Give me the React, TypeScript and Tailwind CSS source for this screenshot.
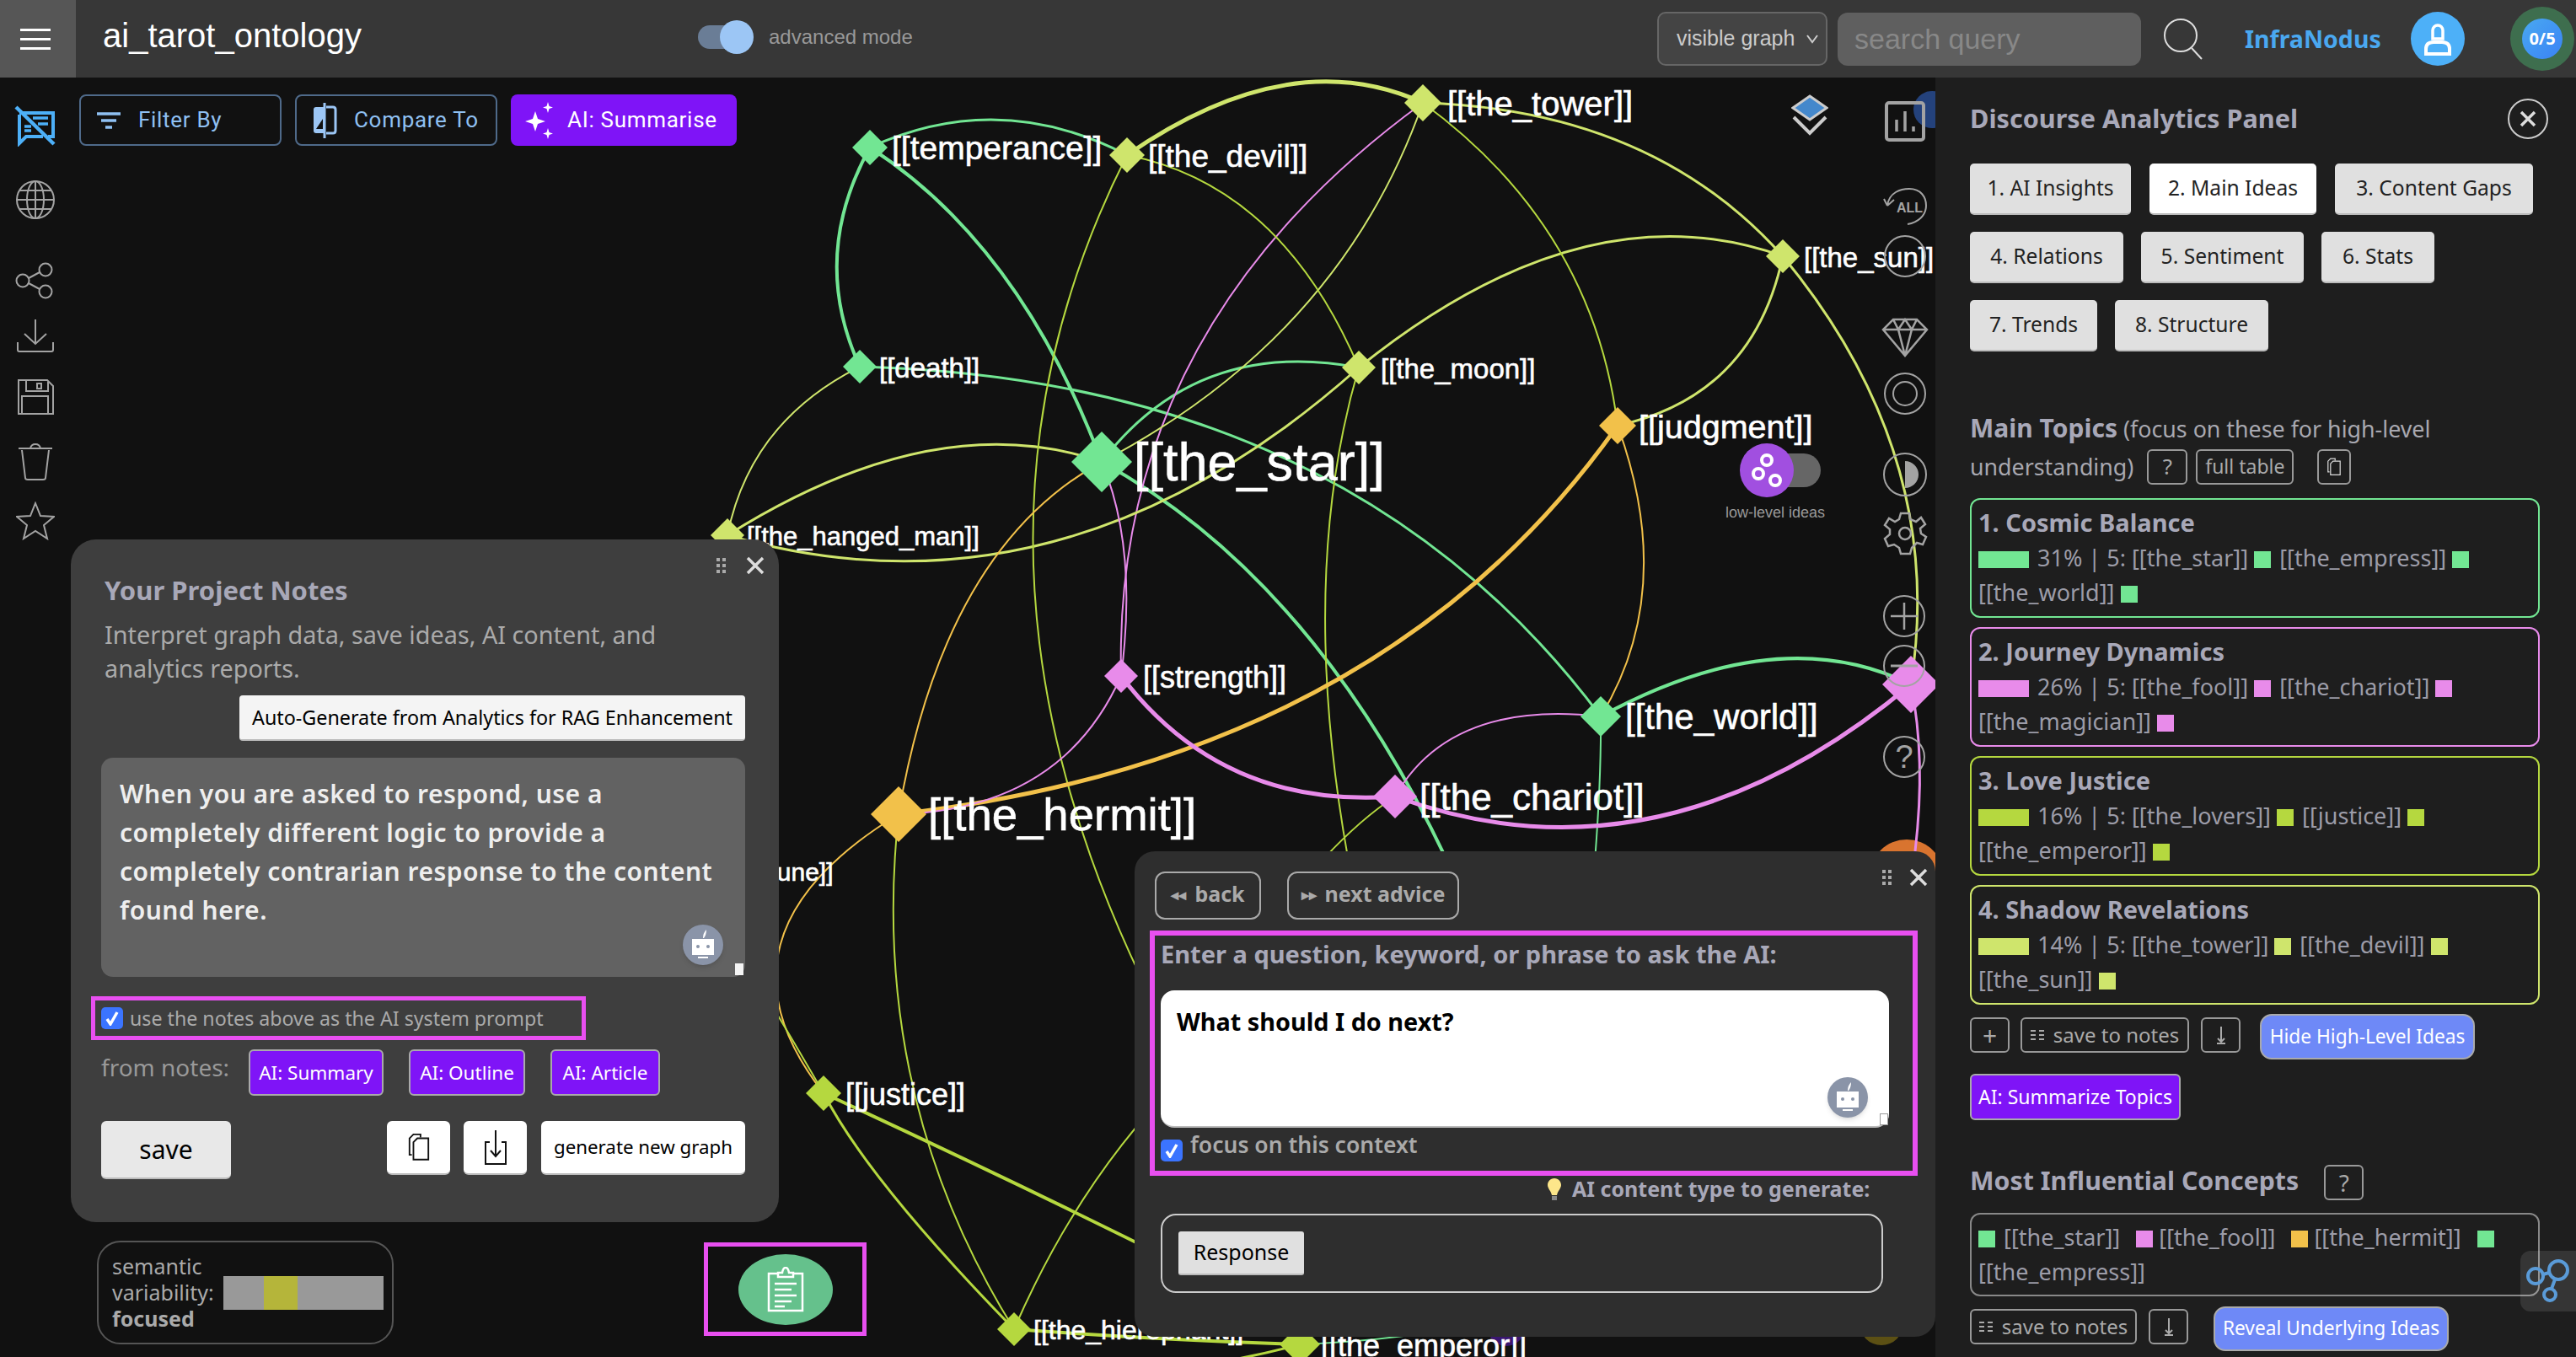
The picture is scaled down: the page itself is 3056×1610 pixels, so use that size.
import React from "react";

const G = "#72e693", L = "#cfe56c", D = "#b5d83f", O = "#f2c14a", P = "#e88bea";

const edges: [string, string, number][] = [
  ["M1032 175Q1210 290 1307 548", G, 4],
  ["M1032 175Q960 305 1020 435", G, 4],
  ["M1032 175Q1185 105 1337 184", G, 3],
  ["M1020 435Q1600 450 1899 850", G, 3],
  ["M1307 548Q1420 400 1612 436", G, 3],
  ["M1307 548Q1620 720 1790 1200", G, 4],
  ["M1899 850Q2110 735 2267 812", G, 4],
  ["M1899 850Q1900 950 1885 1100", G, 2],
  ["M1337 184Q1530 50 1688 122", L, 5],
  ["M1688 122Q1960 130 2115 304", L, 3],
  ["M2115 304Q2310 540 2267 812", L, 3],
  ["M1688 122Q1320 390 1330 802", P, 2],
  ["M1688 122Q1590 400 1307 548", L, 2],
  ["M863 635Q1260 750 1612 436", L, 3],
  ["M863 635Q1110 480 1307 548", L, 3],
  ["M863 635Q890 500 1020 435", L, 2],
  ["M2115 304Q1880 220 1612 436", L, 3],
  ["M2115 304Q2080 470 1919 505", L, 3],
  ["M1688 122Q1890 270 1919 505", D, 2],
  ["M1337 184Q1520 220 1612 436", D, 2],
  ["M1337 184Q1086 680 1400 1250", D, 2],
  ["M1612 436Q1520 750 1640 1200", D, 2],
  ["M1919 505Q1640 900 1066 966", O, 5],
  ["M1919 505Q1990 700 1899 850", O, 2],
  ["M1066 966Q1120 650 1307 548", O, 2],
  ["M1066 966Q830 1110 977 1297", O, 2],
  ["M1330 802Q1350 650 1307 548", P, 2],
  ["M1330 802Q1260 960 1066 966", P, 2],
  ["M1330 802Q1450 960 1655 945", P, 5],
  ["M1655 945Q1970 1060 2267 812", P, 5],
  ["M1655 945Q1720 830 1899 850", P, 2],
  ["M2267 812Q2285 900 2272 1010", P, 3],
  ["M1655 945Q1540 1020 1400 1260", D, 2],
  ["M977 1297Q1030 1400 1203 1577", D, 3],
  ["M977 1297Q1200 1400 1400 1500", D, 4],
  ["M920 1200Q950 1250 977 1297", D, 2],
  ["M1066 966Q1030 1300 1203 1577", D, 2],
  ["M1203 1577Q1280 1400 1400 1280", D, 2],
  ["M1203 1577Q1380 1590 1542 1595", D, 4],
  ["M1542 1595Q1680 1590 1800 1560", G, 2],
  ["M1340 1630Q1450 1620 1542 1595", D, 3],
];

const nodes: { x: number; y: number; r: number; c: string; t: string; lx: number; s: number }[] = [
  { x: 1032, y: 175, r: 21, c: G, t: "[[temperance]]", lx: 1058, s: 39 },
  { x: 1337, y: 184, r: 21, c: L, t: "[[the_devil]]", lx: 1362, s: 37 },
  { x: 1688, y: 122, r: 22, c: L, t: "[[the_tower]]", lx: 1717, s: 40 },
  { x: 2115, y: 304, r: 20, c: L, t: "[[the_sun]]", lx: 2140, s: 33 },
  { x: 1020, y: 435, r: 20, c: G, t: "[[death]]", lx: 1043, s: 33 },
  { x: 1612, y: 436, r: 20, c: L, t: "[[the_moon]]", lx: 1638, s: 33 },
  { x: 1307, y: 548, r: 36, c: G, t: "[[the_star]]", lx: 1345, s: 63 },
  { x: 1919, y: 505, r: 22, c: O, t: "[[judgment]]", lx: 1944, s: 39.5 },
  { x: 863, y: 635, r: 20, c: L, t: "[[the_hanged_man]]", lx: 886, s: 31 },
  { x: 1330, y: 802, r: 20, c: P, t: "[[strength]]", lx: 1356, s: 36 },
  { x: 1899, y: 850, r: 24, c: G, t: "[[the_world]]", lx: 1928, s: 42 },
  { x: 1655, y: 945, r: 26, c: P, t: "[[the_chariot]]", lx: 1684, s: 44 },
  { x: 1066, y: 966, r: 33, c: O, t: "[[the_hermit]]", lx: 1101, s: 54.5 },
  { x: 2267, y: 812, r: 34, c: P, t: "", lx: 2300, s: 40 },
  { x: 977, y: 1297, r: 21, c: D, t: "[[justice]]", lx: 1003, s: 36 },
  { x: 1203, y: 1577, r: 20, c: D, t: "[[the_hierophant]]", lx: 1226, s: 32 },
  { x: 1542, y: 1595, r: 24, c: D, t: "[[the_emperor]]", lx: 1567, s: 36 },
  { x: 800, y: 1033, r: 20, c: O, t: "[[wheel_of_fortune]]", lx: 725, s: 30 },
];

function Graph() {
  return (
    <svg className="absolute inset-0 w-[2296px] h-[1518px] font-['Liberation_Sans',sans-serif]" viewBox="0 92 2296 1518">
      <circle cx="2292" cy="130" r="22" fill="#24427c" />
      <circle cx="2262" cy="1040" r="44" fill="#d9742f" />
      <circle cx="2232" cy="1570" r="26" fill="#5c5014" />
      <circle cx="1787" cy="1575" r="22" fill="#3a1670" />
      {edges.map(([d, c, w], i) => (
        <path key={i} d={d} fill="none" stroke={c} strokeWidth={w} />
      ))}
      {nodes.map((n) => (
        <g key={n.t + n.x}>
          <polygon points={`${n.x - n.r},${n.y} ${n.x},${n.y - n.r} ${n.x + n.r},${n.y} ${n.x},${n.y + n.r}`} fill={n.c} />
          {n.t && (
            <text x={n.lx} y={n.y + n.s * 0.32 + 2} fontSize={n.s} fill="#fff" stroke="#fff" strokeWidth="0.6">
              {n.t}
            </text>
          )}
        </g>
      ))}
    </svg>
  );
}

const grayStroke = { fill: "none", stroke: "#a3a3a3", strokeWidth: 2 };

function LeftIcons() {
  return (
    <div className="relative flex flex-col items-center w-[84px] shrink-0 pt-[32px]">
      <svg width="50" height="50" viewBox="0 0 50 50" fill="none" stroke="#4db0f8">
        <path d="M6 10H46V38H40M34 38H14L6 46V12" strokeWidth="4" />
        <path d="M22 16H40M28 23H40M12 26H20M12 31H20" strokeWidth="3.5" />
        <path d="M2 3L47 47" strokeWidth="4.5" />
      </svg>
      <svg className="mt-[39px]" width="48" height="48" viewBox="0 0 48 48" {...grayStroke}>
        <circle cx="24" cy="24" r="22" />
        <ellipse cx="24" cy="24" rx="10" ry="22" />
        <path d="M24 2V46M2 24H46M5 13H43M5 35H43" />
      </svg>
      <svg className="mt-[50px]" width="48" height="44" viewBox="0 0 48 44" {...grayStroke}>
        <circle cx="9" cy="22" r="7.5" />
        <circle cx="36" cy="9" r="7.5" />
        <circle cx="36" cy="35" r="7.5" />
        <path d="M16 19L29 12M16 25L29 32" />
      </svg>
      <svg className="mt-[22px]" width="46" height="42" viewBox="0 0 46 42" {...grayStroke}>
        <path d="M23 2V30M10 19L23 31L36 19M2 29V38Q2 40 4 40H42Q44 40 44 38V29" />
      </svg>
      <svg className="mt-[30px]" width="44" height="44" viewBox="0 0 44 44" {...grayStroke}>
        <path d="M2 2H36L43 9V42H2ZM11 2V15H37V4M6 42V21H37V42" />
        <rect x="24" y="6" width="5" height="6" />
      </svg>
      <svg className="mt-[32px]" width="44" height="46" viewBox="0 0 44 46" {...grayStroke}>
        <path d="M2 7H42M16 7Q17 2 22 2Q27 2 28 7M6 9L10 42Q10 44 13 44H31Q34 44 34 42L38 9" />
      </svg>
      <svg className="mt-[24px]" width="46" height="46" viewBox="0 0 46 46" {...grayStroke}>
        <path d="M23 2L29 17L45 18L33 28L37 44L23 35L9 44L13 28L1 18L17 17Z" />
      </svg>
    </div>
  );
}

function TopBar() {
  return (
    <header className="flex items-center h-[92px] bg-[#373737] shrink-0">
      <div className="w-[90px] h-full bg-[#565656] flex flex-col items-center justify-center gap-[8px] pr-[6px]">
        <span className="block w-[36px] h-[3px] bg-white" />
        <span className="block w-[36px] h-[3px] bg-white" />
        <span className="block w-[36px] h-[3px] bg-white" />
      </div>
      <div className="ml-[32px] w-[706px] text-[40px] text-white font-['Liberation_Sans',sans-serif] -mt-[8px]">ai_tarot_ontology</div>
      <div className="relative w-[64px] h-[28px] rounded-full bg-[#6a7d96] -mt-[4px]">
        <span className="absolute -right-[2px] -top-[6px] w-[40px] h-[40px] rounded-full bg-[#9cc6f5]" />
      </div>
      <div className="ml-[20px] w-[1054px] text-[24px] text-[#999] font-['Liberation_Sans',sans-serif] -mt-[4px]">advanced mode</div>
      <div className="flex items-center justify-between w-[202px] h-[64px] rounded-[10px] bg-[#444] border-2 border-[#666] pl-[21px] pr-[8px] text-[25px] text-[#ccc] font-['Liberation_Sans',sans-serif]">
        visible graph
        <svg width="16" height="12" viewBox="0 0 16 12" fill="none" stroke="#ccc" strokeWidth="2"><path d="M2 2L8 10L14 2" /></svg>
      </div>
      <div className="ml-[12px] w-[360px] h-[63px] rounded-[12px] bg-[#5f5f5f] pl-[20px] flex items-center text-[34px] text-[#888] font-['Liberation_Sans',sans-serif]">search query</div>
      <svg className="ml-[25px]" width="50" height="50" viewBox="0 0 50 50" fill="none" stroke="#ddd" strokeWidth="2">
        <circle cx="22" cy="21" r="19" />
        <path d="M35 36L47 49" />
      </svg>
      <div className="ml-[48px] text-[28.5px] font-bold text-[#4aa8f0] w-[197px]">InfraNodus</div>
      <div className="w-[64px] h-[64px] rounded-full bg-[#4db0f8] flex items-center justify-center">
        <svg width="34" height="40" viewBox="0 0 34 40" fill="none" stroke="#fff" strokeWidth="4">
          <path d="M11 20V10A6 6 0 0 1 23 10V20Z" strokeWidth="3.5" />
          <path d="M3 38V32Q3 24 12 24H22Q31 24 31 32V38Z" />
        </svg>
      </div>
      <div className="ml-[54px] w-[76px] h-[76px] rounded-full bg-[#3e6e4e] flex items-center justify-center">
        <div className="w-[48px] h-[48px] rounded-full bg-gradient-to-br from-[#4aa8f0] to-[#3b82f6] flex items-center justify-center text-[20px] font-bold text-white">0/5</div>
      </div>
    </header>
  );
}

function FilterBar() {
  const cls = "h-[61px] rounded-[8px] flex items-center text-[26px] tracking-[0.7px] font-['Roboto',sans-serif]";
  return (
    <div className="relative flex gap-[16px] h-[61px] mt-[20px] ml-[10px]">
      <div className={`${cls} w-[240px] border-2 border-[#4f6a8a] text-[#8fc0f2] pl-[18px] gap-[20px]`}>
        <svg width="30" height="30" viewBox="0 0 30 30" stroke="#8fc0f2" strokeWidth="3.5"><path d="M1 7H29M6 15H24M11 23H19" /></svg>
        Filter By
      </div>
      <div className={`${cls} w-[240px] border-2 border-[#4f6a8a] text-[#8fc0f2] pl-[18px] gap-[20px]`}>
        <svg width="30" height="44" viewBox="0 0 30 44" fill="none">
          <path d="M14 6H5Q2 6 2 9V34Q2 37 5 37H14Z" fill="#9cc6f5" />
          <path d="M17 6H25Q28 6 28 9V34Q28 37 25 37H17" stroke="#9cc6f5" strokeWidth="3" />
          <path d="M15 1V43" stroke="#9cc6f5" strokeWidth="3" />
          <path d="M5 32L13 20V32Z" fill="#111" />
        </svg>
        Compare To
      </div>
      <div className={`${cls} w-[268px] bg-[#7f14f7] text-white pl-[17px] gap-[16px]`}>
        <svg width="34" height="48" viewBox="0 0 34 48" fill="#fff">
          <path d="M12 13L15 22L24 25L15 28L12 37L9 28L0 25L9 22Z" />
          <path d="M27 2L28.5 7L33 8.5L28.5 10L27 15L25.5 10L21 8.5L25.5 7Z" />
          <path d="M27 33L28.5 38L33 39.5L28.5 41L27 46L25.5 41L21 39.5L25.5 38Z" />
        </svg>
        AI: Summarise
      </div>
    </div>
  );
}

const RoundIcon = ({ className, children }: { className?: string; children?: React.ReactNode }) => (
  <div className={`w-[50px] h-[50px] rounded-full border-2 border-[#a3a3a3] flex items-center justify-center ${className ?? ""}`}>{children}</div>
);

function RightIcons() {
  return (
    <div className="absolute top-[28px] left-[2234px] w-[52px] flex flex-col items-center">
      <svg width="48" height="48" viewBox="0 0 48 48" fill="none" stroke="#a3a3a3">
        <rect x="2" y="2" width="44" height="44" rx="3" strokeWidth="4" />
        <path d="M14 36V22M24 36V12M34 36V30" strokeWidth="3.5" />
      </svg>
      <svg className="mt-[54px]" width="54" height="46" viewBox="0 0 54 46" fill="none" stroke="#a3a3a3" strokeWidth="2">
        <path d="M6 22L2 14M6 22L14 15M6 22C8 6 22 2 32 2C46 2 52 12 52 22C52 34 42 42 30 44" />
        <text x="17" y="30" fontSize="16" fontWeight="700" fill="#a3a3a3" stroke="none" className="font-['Liberation_Sans',sans-serif]">ALL</text>
      </svg>
      <RoundIcon className="mt-[11px]" />
      <svg className="mt-[47px]" width="56" height="48" viewBox="0 0 56 48" fill="none" stroke="#a3a3a3" strokeWidth="2.5">
        <path d="M14 3H42L54 15L28 46L2 15ZM2 15H54M14 3L20 15L28 46L36 15L42 3M20 15L28 3L36 15" />
      </svg>
      <RoundIcon className="mt-[18px]">
        <span className="w-[30px] h-[30px] rounded-full border-2 border-[#a3a3a3]" />
      </RoundIcon>
      <div className="w-[52px] h-[52px] mt-[45px] rounded-full border-2 border-[#a3a3a3] flex items-center justify-end pr-[8px]">
        <span className="w-[16px] h-[32px] rounded-r-full bg-[#a3a3a3]" />
      </div>
      <svg className="mt-[17px]" width="54" height="54" viewBox="0 0 54 54" fill="none" stroke="#a3a3a3" strokeWidth="2.5">
        <circle cx="27" cy="27" r="7" />
        <path d="M22 3H32L33 10L40 13L46 8L51 16L45 21L46 27L52 31L48 40L41 38L35 44L33 51H22L20 44L14 40L7 42L3 33L9 28V22L3 17L8 9L15 13L20 10Z" />
      </svg>
      <RoundIcon className="mt-[46px] relative -left-[1px]">
        <svg width="36" height="36" viewBox="0 0 36 36" stroke="#a3a3a3" strokeWidth="2.5"><path d="M18 2V34M2 18H34" /></svg>
      </RoundIcon>
      <RoundIcon className="mt-[9px] relative -left-[1px]">
        <svg width="36" height="8" viewBox="0 0 36 8" stroke="#a3a3a3" strokeWidth="3"><path d="M2 4H34" /></svg>
      </RoundIcon>
      <RoundIcon className="mt-[58px] relative -left-[1px] text-[38px] text-[#a3a3a3] font-['Liberation_Sans',sans-serif]">?</RoundIcon>
    </div>
  );
}

function Bot() {
  return (
    <div className="absolute w-[48px] h-[48px] rounded-full bg-[#8a94a8] flex items-center justify-center shadow-md">
      <svg width="28" height="36" viewBox="0 0 28 36">
        <path d="M14 10Q14 4 18 0Q18 6 15 10Z" fill="#fff" />
        <rect x="1" y="11" width="26" height="19" fill="#fff" />
        <circle cx="8" cy="20" r="2" fill="#8a94a8" />
        <circle cx="20" cy="20" r="2" fill="#8a94a8" />
        <rect x="8" y="32" width="12" height="2" fill="#fff" />
      </svg>
    </div>
  );
}

function Grip({ className }: { className?: string }) {
  return (
    <div className={`absolute grid grid-cols-2 gap-x-[3px] gap-y-[3px] ${className ?? ""}`}>
      {[0, 1, 2, 3, 4, 5].map((i) => <span key={i} className="block w-[4px] h-[4px] bg-[#aaa]" />)}
    </div>
  );
}

function CloseX({ className }: { className?: string }) {
  return (
    <svg className={`absolute ${className ?? ""}`} width="22" height="22" viewBox="0 0 22 22" stroke="#ddd" strokeWidth="3.5">
      <path d="M2 2L20 20M20 2L2 20" />
    </svg>
  );
}

function Check() {
  return (
    <span className="w-[26px] h-[26px] rounded-[5px] bg-[#3b74ff] flex items-center justify-center shrink-0">
      <svg width="18" height="18" viewBox="0 0 18 18" fill="none" stroke="#fff" strokeWidth="3.5"><path d="M3 10L7 16L15 2" /></svg>
    </span>
  );
}

const Corner = ({ className }: { className?: string }) => (
  <span className={`absolute w-[10px] h-[14px] bg-[#f4f4f4] ${className ?? ""}`} />
);

function Copy({ stroke = "#111", size = 30 }: { stroke?: string; size?: number }) {
  return (
    <svg width={size} height={size * 1.2} viewBox="0 0 30 36" fill="none" stroke={stroke} strokeWidth="2">
      <path d="M6 28H3V7L8 2H17V6" />
      <path d="M8 12L13 7H27V34H8Z" />
    </svg>
  );
}

function NotesPanel() {
  const purple = "h-[55px] rounded-[6px] bg-[#7f14f7] border-2 border-[#aaa] text-white text-[22.5px] flex items-center justify-center";
  const white = "h-[64px] rounded-[6px] bg-white border-b-2 border-[#bbb] flex items-center justify-center";
  return (
    <div className="absolute left-[84px] top-[548px] w-[840px] h-[810px] rounded-[30px] bg-[#3e3e3e] pl-[36px] pr-[40px] pt-[40px]">
      <Grip className="right-[63px] top-[22px]" />
      <CloseX className="right-[17px] top-[20px]" />
      <div className="pl-[4px] text-[31px] leading-[40px] font-bold text-[#a8a8b8]">Your Project Notes</div>
      <div className="pl-[4px] mt-[13px] text-[28.8px] leading-[40px] text-[#aaa]">Interpret graph data, save ideas, AI content, and<br />analytics reports.</div>
      <div className="flex justify-end mt-[12px]">
        <div className="w-[600px] h-[54px] rounded-[4px] bg-[#f4f4f4] border-b-2 border-[#bbb] flex items-center justify-center text-[23.3px] text-black">Auto-Generate from Analytics for RAG Enhancement</div>
      </div>
      <div className="relative mt-[20px] h-[260px] rounded-[14px] bg-[#626262] pl-[22px] pt-[20px] text-[30px] leading-[46px] font-semibold tracking-[0.5px] text-[#eee]">
        When you are asked to respond, use a<br />completely different logic to provide a<br />completely contrarian response to the content<br />found here.
        <div className="absolute right-[74px] top-[198px]"><Bot /></div>
        <Corner className="right-[2px] bottom-[2px]" />
      </div>
      <div className="-ml-[12px] mt-[23px] w-[587px] h-[52px] border-[5px] border-[#e84ff0] flex items-center gap-[8px] pl-[7px] text-[23.2px] text-[#aaa]">
        <Check />
        use the notes above as the AI system prompt
      </div>
      <div className="flex items-start mt-[11px]">
        <span className="w-[175px] text-[28px] leading-[42px] text-[#999]">from notes:</span>
        <div className={`${purple} w-[160px]`}>AI: Summary</div>
        <div className={`${purple} w-[138px] ml-[30px]`}>AI: Outline</div>
        <div className={`${purple} w-[130px] ml-[30px]`}>AI: Article</div>
      </div>
      <div className="flex items-start mt-[30px]">
        <div className="w-[154px] h-[69px] rounded-[6px] bg-[#e8e8e8] border-b-2 border-[#bbb] flex items-center justify-center text-[30px] text-black">save</div>
        <div className={`${white} w-[75px] ml-[185px]`}><Copy size={28} /></div>
        <div className={`${white} w-[75px] ml-[16px]`}>
          <svg width="30" height="44" viewBox="0 0 30 44" fill="none" stroke="#111" strokeWidth="2"><path d="M8 16H3V42H27V16H22M15 2V32M9 26L15 33L21 26" /></svg>
        </div>
        <div className={`${white} w-[242px] ml-[17px] bg-[#f4f4f4] text-[22.3px] text-black`}>generate new graph</div>
      </div>
    </div>
  );
}

function Semantic() {
  return (
    <div className="absolute left-[115px] top-[1380px] w-[352px] h-[123px] rounded-[28px] border-2 border-[#555] pl-[16px] pt-[14px] flex items-center text-[25px] leading-[31px] text-[#aaa]">
      <div className="w-[132px] -mt-[14px]">semantic<br />variability:<br /><b>focused</b></div>
      <div className="flex w-[190px] h-[40px] -mt-[14px] bg-[#999]">
        <span className="ml-[48px] w-[40px] bg-[#b5b53a]" />
      </div>
    </div>
  );
}

function NoteFab() {
  return (
    <div className="absolute left-[835px] top-[1382px] w-[193px] h-[111px] border-[5px] border-[#e84ff0] flex items-center justify-center">
      <div className="w-[112px] h-[84px] rounded-[50%] bg-[#65c18c] flex items-center justify-center">
        <svg width="46" height="54" viewBox="0 0 46 54" fill="none" stroke="#fff" strokeWidth="2.5">
          <path d="M14 8H3V52H43V8H32" />
          <path d="M14 12V7H19Q20 1 23 1Q26 1 27 7H32V12Z" />
          <path d="M10 20H36M10 27H30M10 34H36M10 41H30M10 47H22" />
        </svg>
      </div>
    </div>
  );
}

function AskPanel() {
  return (
    <div className="absolute left-[1346px] top-[918px] w-[950px] h-[576px] rounded-[24px] bg-[#2e2e2e] pt-[24px] pl-[18px]">
      <Grip className="right-[52px] top-[22px]" />
      <CloseX className="right-[9px] top-[20px]" />
      <div className="flex gap-[31px] pl-[6px] text-[25px] font-bold text-[#aaa]">
        <div className="w-[126px] h-[57px] rounded-[12px] border-2 border-[#aaa] flex items-center justify-center gap-[10px] pb-[3px]">
          <span className="text-[18px]">◂◂</span>back
        </div>
        <div className="w-[204px] h-[57px] rounded-[12px] border-2 border-[#aaa] flex items-center justify-center gap-[10px] pb-[3px]">
          <span className="text-[18px]">▸▸</span>next advice
        </div>
      </div>
      <div className="mt-[13px] w-[911px] h-[291px] border-[6px] border-[#e84ff0] pl-[7px] pt-[2px]">
        <div className="text-[29px] leading-[40px] font-bold text-[#a8a8b8]">Enter a question, keyword, or phrase to ask the AI:</div>
        <div className="relative mt-[23px] w-[864px] h-[163px] rounded-[16px] bg-white border-b-2 border-[#bbb] pl-[19px] pt-[17px] text-[28.8px] leading-[40px] font-bold text-black">
          What should I do next?
          <div className="absolute right-[73px] top-[103px]"><Bot /></div>
          <Corner className="right-[1px] bottom-[1px] bg-white border border-[#999]" />
        </div>
        <div className="flex items-start gap-[9px] mt-[12px] text-[26.5px] leading-[36px] font-semibold text-[#aaa]">
          <span className="mt-[2px]"><Check /></span>
          <span className="-mt-[10px]">focus on this context</span>
        </div>
      </div>
      <div className="flex items-center gap-[13px] mt-[-2px] pl-[472px] h-[36px] text-[25px] font-bold text-[#a8a8b8]">
        <svg width="16" height="26" viewBox="0 0 16 26"><path d="M8 0C13 0 16 4 16 8C16 12 12 15 11 20H5C4 15 0 12 0 8C0 4 3 0 8 0Z" fill="#fde68a" /><rect x="5" y="21" width="6" height="5" fill="#888" /></svg>
        AI content type to generate:
      </div>
      <div className="ml-[13px] mt-[11px] w-[857px] h-[94px] rounded-[18px] border-2 border-[#ccc] pl-[19px] flex items-center">
        <div className="w-[149px] h-[52px] bg-[#e0e0e0] border-b-2 border-[#bbb] rounded-[3px] flex items-center justify-center text-[25px] text-black">Response</div>
      </div>
    </div>
  );
}

const Sq = ({ c }: { c: string }) => <span className={`inline-block align-[-2px] w-[20px] h-[20px] ${c}`} />;
const Bar = ({ c }: { c: string }) => <span className={`inline-block align-[-2px] w-[60px] h-[20px] mr-[10px] ${c}`} />;

function Card({ border, sq, title, head, items, last }: { border: string; sq: string; title: string; head: string; items: string[]; last: string }) {
  return (
    <div className={`h-[142px] rounded-[12px] border-2 ${border} pl-[8px] pt-[7px] text-[#9c9ca8]`}>
      <div className="text-[29px] leading-[40px] font-bold text-[#a8a8b8]">{title}</div>
      <div className="text-[27px] leading-[41px] mt-[1px] whitespace-nowrap">
        <Bar c={sq} />
        {head} {items[0]} <Sq c={sq} /> <span className="ml-[3px]">{items[1]}</span> <Sq c={sq} />
        <br />
        {last} <Sq c={sq} />
      </div>
    </div>
  );
}

const Outline = ({ className, children }: { className?: string; children?: React.ReactNode }) => (
  <div className={`h-[42px] rounded-[6px] border-2 border-[#999] flex items-center justify-center whitespace-nowrap text-[#aaa] ${className ?? ""}`}>{children}</div>
);

const GridDots = () => (
  <svg width="16" height="14" viewBox="0 0 16 14" fill="#aaa" className="mr-[11px]">
    <rect x="0" y="1" width="6" height="2" /><rect x="10" y="1" width="6" height="2" />
    <rect x="0" y="6" width="6" height="2" /><rect x="10" y="6" width="6" height="2" />
    <rect x="0" y="11" width="6" height="2" /><rect x="10" y="11" width="6" height="2" />
  </svg>
);

const DownArrow = () => (
  <svg width="14" height="22" viewBox="0 0 14 22" stroke="#aaa" strokeWidth="2"><path d="M7 1V19M3 15L7 19L11 15M2 21H12" fill="none" /></svg>
);

function Tab({ children, active, w }: { children: React.ReactNode; active?: boolean; w: string }) {
  return (
    <div className={`h-[61px] rounded-[5px] flex items-center justify-center whitespace-nowrap text-[24.6px] text-[#222] border-b-2 border-[#bbb] ${w} ${active ? "bg-white" : "bg-[#e0e0e0]"}`}>{children}</div>
  );
}

function Panel() {
  return (
    <aside className="relative w-[760px] shrink-0 bg-[#1e1e1e] pl-[41px] pr-[43px] overflow-hidden">
      <div className="flex items-center justify-between mt-[26px] h-[46px]">
        <div className="text-[30.6px] font-bold text-[#a8a8b8]">Discourse Analytics Panel</div>
        <div className="w-[48px] h-[48px] rounded-full border-2 border-[#ccc] flex items-center justify-center mr-[-10px]">
          <svg width="20" height="20" viewBox="0 0 20 20" stroke="#ddd" strokeWidth="3.5"><path d="M2 2L18 18M18 2L2 18" /></svg>
        </div>
      </div>
      <div className="mt-[30px] flex flex-col gap-[20px]">
        <div className="flex gap-[22px]"><Tab w="w-[191px]">1. AI Insights</Tab><Tab w="w-[198px]" active>2. Main Ideas</Tab><Tab w="w-[235px]">3. Content Gaps</Tab></div>
        <div className="flex gap-[21px]"><Tab w="w-[182px]">4. Relations</Tab><Tab w="w-[193px]">5. Sentiment</Tab><Tab w="w-[134px]">6. Stats</Tab></div>
        <div className="flex gap-[21px]"><Tab w="w-[151px]">7. Trends</Tab><Tab w="w-[182px]">8. Structure</Tab></div>
      </div>
      <div className="mt-[68px] text-[26.8px] leading-[45px] text-[#a8a8b0]">
        <b className="text-[30px] text-[#a8a8b8]">Main Topics</b> (focus on these for high-level
        <div className="flex items-center h-[45px]">
          understanding)
          <Outline className="w-[48px] h-[41px] ml-[16px] text-[26px]">?</Outline>
          <Outline className="w-[116px] h-[41px] ml-[10px] text-[23px]">full table</Outline>
          <Outline className="w-[40px] h-[40px] ml-[28px]"><Copy stroke="#ddd" size={18} /></Outline>
        </div>
      </div>
      <div className="mt-[15px] flex flex-col gap-[11px]">
        <Card border="border-[#72e693]" sq="bg-[#72e693]" title="1. Cosmic Balance" head="31% | 5:" items={["[[the_star]]", "[[the_empress]]"]} last="[[the_world]]" />
        <Card border="border-[#e88bea]" sq="bg-[#e88bea]" title="2. Journey Dynamics" head="26% | 5:" items={["[[the_fool]]", "[[the_chariot]]"]} last="[[the_magician]]" />
        <Card border="border-[#b5d83f]" sq="bg-[#b5d83f]" title="3. Love Justice" head="16% | 5:" items={["[[the_lovers]]", "[[justice]]"]} last="[[the_emperor]]" />
        <Card border="border-[#cfe56c]" sq="bg-[#cfe56c]" title="4. Shadow Revelations" head="14% | 5:" items={["[[the_tower]]", "[[the_devil]]"]} last="[[the_sun]]" />
      </div>
      <div className="flex items-start mt-[11px] text-[24px]">
        <Outline className="w-[47px] mt-[4px] text-[30px]">+</Outline>
        <Outline className="w-[200px] mt-[4px] ml-[13px]"><GridDots />save to notes</Outline>
        <Outline className="w-[47px] mt-[4px] ml-[14px]"><DownArrow /></Outline>
        <div className="ml-[23px] w-[255px] h-[54px] rounded-[14px] bg-[#6e89f7] border-2 border-[#aaa] flex items-center justify-center whitespace-nowrap text-[22.7px] text-white">Hide High-Level Ideas</div>
      </div>
      <div className="mt-[17px] w-[250px] h-[55px] rounded-[6px] bg-[#7f14f7] border-2 border-[#aaa] flex items-center justify-center whitespace-nowrap text-[23px] text-white">AI: Summarize Topics</div>
      <div className="flex items-center mt-[53px] h-[41px]">
        <b className="text-[30.3px] text-[#a8a8b8] -mt-[4px]">Most Influential Concepts</b>
        <Outline className="w-[47px] h-[41px] ml-[30px] text-[28px]">?</Outline>
      </div>
      <div className="mt-[16px] h-[99px] rounded-[12px] border-2 border-[#888] pl-[8px] pt-[6px] text-[27px] leading-[41px] text-[#9c9ca8] whitespace-nowrap">
        <Sq c="bg-[#72e693]" /> <span className="ml-[3px]">[[the_star]]</span> <Sq c="bg-[#e88bea] ml-[12px]" /> [[the_fool]] <Sq c="bg-[#f2c14a] ml-[12px]" /> [[the_hermit]] <Sq c="bg-[#72e693] ml-[12px]" />
        <br />[[the_empress]]
      </div>
      <div className="flex items-start mt-[12px] text-[24px]">
        <Outline className="w-[198px] mt-[3px]"><GridDots />save to notes</Outline>
        <Outline className="w-[47px] mt-[3px] ml-[14px]"><DownArrow /></Outline>
        <div className="ml-[30px] w-[279px] h-[53px] rounded-[14px] bg-[#6e89f7] border-2 border-[#aaa] flex items-center justify-center whitespace-nowrap text-[22.7px] text-white">Reveal Underlying Ideas</div>
      </div>
      <div className="absolute right-0 top-[1392px] w-[66px] h-[72px] rounded-l-[12px] bg-white/10 flex items-center justify-center">
        <svg width="52" height="52" viewBox="0 0 52 52" fill="none" stroke="#5a9bd8" strokeWidth="4">
          <circle cx="11" cy="20" r="9" />
          <circle cx="38" cy="13" r="11" />
          <circle cx="28" cy="42" r="7" />
          <path d="M20 18L27 16M34 24L30 35" />
        </svg>
      </div>
    </aside>
  );
}

export default function App() {
  return (
    <div className="w-[3056px] h-[1610px] flex flex-col overflow-hidden bg-[#111] font-['Noto_Sans',sans-serif]">
      <TopBar />
      <main className="flex h-[1518px]">
        <div className="relative w-[2296px] shrink-0 bg-[#111] overflow-hidden flex items-start">
          <Graph />
          <LeftIcons />
          <FilterBar />
          <svg className="absolute left-[2125px] top-[20px]" width="44" height="50" viewBox="0 0 44 50" fill="none">
            <path d="M22 2L42 16L22 30L2 16Z" fill="#4488cc" stroke="#ccc" strokeWidth="3" />
            <path d="M3 27L22 46L41 27" stroke="#ccc" strokeWidth="4" />
          </svg>
          <RightIcons />
          <div className="absolute left-[2064px] top-[433px] w-[96px] h-[66px] flex items-center">
            <span className="absolute left-[20px] w-[76px] h-[40px] rounded-full bg-[#666]" />
            <span className="relative w-[64px] h-[64px] rounded-full bg-[#a14fe0] flex items-center justify-center">
              <svg width="36" height="40" viewBox="0 0 36 40" fill="none" stroke="#fff" strokeWidth="4"><circle cx="18" cy="8" r="6" /><circle cx="8" cy="24" r="6" /><circle cx="28" cy="32" r="6" /></svg>
            </span>
          </div>
          <div className="absolute left-[2047px] top-[503px] text-[18px] text-[#999] font-['Liberation_Sans',sans-serif]">low-level ideas</div>
          <NotesPanel />
          <Semantic />
          <NoteFab />
          <AskPanel />
        </div>
        <Panel />
      </main>
    </div>
  );
}
